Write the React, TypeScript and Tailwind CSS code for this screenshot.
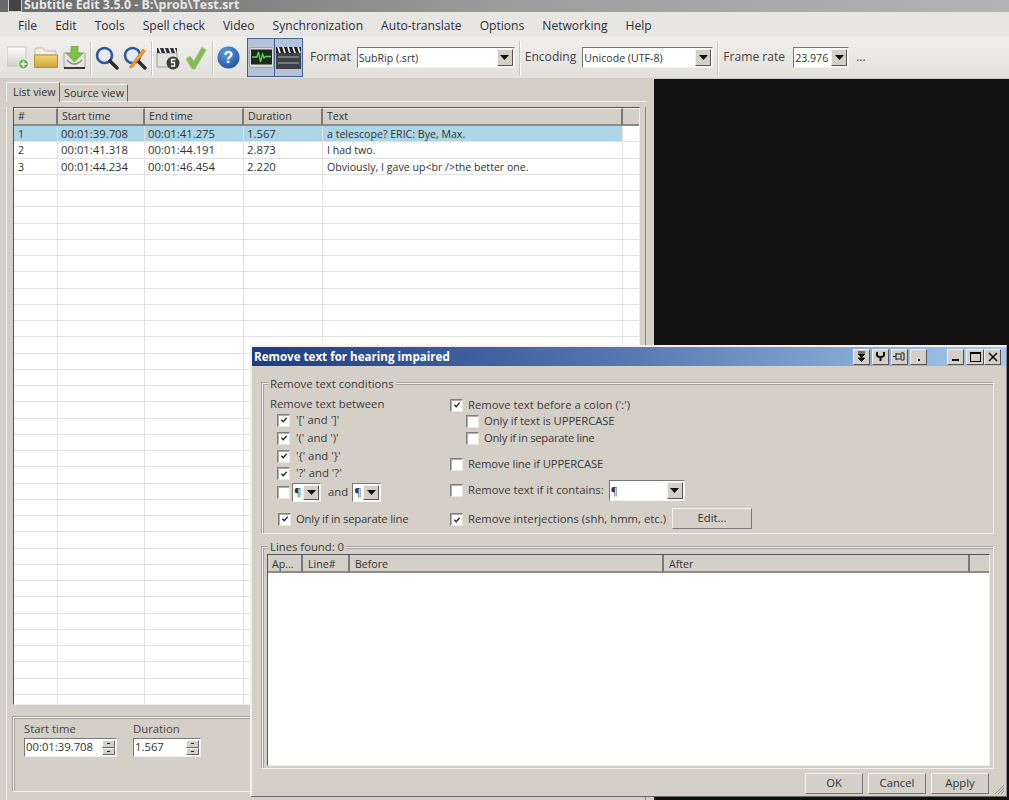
import React from "react";

const font = { fontFamily: '"Open Sans","Noto Sans","Liberation Sans",sans-serif' };

function Check({ on = false, size = "w-[13px] h-[13px]" }: { on?: boolean; size?: string }) {
  return (
    <span className={`${size} shrink-0 bg-white border border-t-[#808080] border-l-[#808080] border-b-[#e8e6e0] border-r-[#e8e6e0] shadow-[inset_1px_1px_0_#b0ada6] flex items-center justify-center`}>
      {on && (
        <svg width="8" height="8" viewBox="0 0 9 9">
          <path d="M1.5 4.2 L3.6 6.5 L7.5 2" fill="none" stroke="#222" strokeWidth="1.4" />
        </svg>
      )}
    </span>
  );
}

function Arrow({ w = "w-[16px]" }: { w?: string }) {
  return (
    <span className={`${w} self-stretch shrink-0 bg-[#d4d0c8] border border-t-[#f4f3f0] border-l-[#f4f3f0] border-b-[#555] border-r-[#555] flex items-center justify-center`}>
      <svg width="9" height="5" viewBox="0 0 9 5">
        <path d="M0 0 H9 L4.5 5 Z" fill="#111" />
      </svg>
    </span>
  );
}

function Combo({ text, w }: { text: string; w: string }) {
  return (
    <span className={`${w} h-[21px] shrink-0 flex items-center bg-white border border-t-[#777] border-l-[#777] border-b-[#f4f3f0] border-r-[#f4f3f0] p-[1px] text-[#333] text-[10.6px]`}>
      <span className="flex-1 overflow-hidden whitespace-nowrap leading-[16px]">{text}</span>
      <Arrow />
    </span>
  );
}

function Spin({ text, w }: { text: string; w: string }) {
  return (
    <span className={`${w} h-[19px] flex items-center bg-white border border-t-[#777] border-l-[#777] border-b-[#f0efec] border-r-[#f0efec] p-[1px] text-[11.3px] text-[#333]`}>
      <span className="flex-1 whitespace-nowrap overflow-hidden">{text}</span>
      <span className="w-[13px] self-stretch flex flex-col">
        <span className="flex-1 bg-[#d4d0c8] border border-t-white border-l-white border-b-[#666] border-r-[#666] flex items-center justify-center"><span className="w-[3px] h-[1px] bg-[#222]" /></span>
        <span className="flex-1 bg-[#d4d0c8] border border-t-white border-l-white border-b-[#666] border-r-[#666] flex items-center justify-center"><span className="w-[3px] h-[1px] bg-[#222]" /></span>
      </span>
    </span>
  );
}

function Btn({ children, w }: { children: React.ReactNode; w: string }) {
  return (
    <span className={`${w} h-[21px] shrink-0 flex items-center justify-center bg-[#d4d0c8] border border-t-[#f4f3f0] border-l-[#f4f3f0] border-b-[#777] border-r-[#777] text-[11.3px] text-[#333]`}>
      {children}
    </span>
  );
}

function Sep() {
  return <span className="block w-[2px] h-[34px] shrink-0 border-l border-l-[#c9c6bf] border-r border-r-white" />;
}

function NewIcon() {
  return (
    <svg width="23" height="24" viewBox="0 0 23 24">
      <defs><linearGradient id="n1" x1="0" y1="0" x2="0" y2="1"><stop offset="0" stopColor="#fff" /><stop offset="1" stopColor="#cfcfcb" /></linearGradient></defs>
      <path d="M0 1 H19 V20 H0 Z" fill="url(#n1)" stroke="#c4c3be" />
      <circle cx="16.5" cy="18" r="5" fill="#5fae4a" stroke="#fff" />
      <path d="M16.5 15 V21 M13.5 18 H19.5" stroke="#fff" strokeWidth="1.6" />
    </svg>
  );
}
function FolderIcon() {
  return (
    <svg width="24" height="22" viewBox="0 0 24 22">
      <defs><linearGradient id="f1" x1="0" y1="0" x2="0" y2="1"><stop offset="0" stopColor="#f0d678" /><stop offset="1" stopColor="#cfa438" /></linearGradient></defs>
      <path d="M1 6 V3 Q1 1 3 1 H9 L11 4 H22 V8 H1 Z" fill="#f0efe9" stroke="#bdb9ae" />
      <path d="M0.5 8 H23.5 V20.5 H0.5 Z" fill="url(#f1)" stroke="#b8912f" />
    </svg>
  );
}
function DownloadIcon() {
  return (
    <svg width="23" height="24" viewBox="0 0 23 24">
      <path d="M1 7 H22 V22 H1 Z" fill="#e6e5df" stroke="#a9a8a0" />
      <path d="M4 14 Q11.5 22 19 14" fill="none" stroke="#8b8b85" strokeWidth="1.5" />
      <path d="M1 21 H22 V23 H1 Z" fill="#3d3d3a" />
      <path d="M8 0 H15 V7 H20 L11.5 16 L3 7 H8 Z" fill="#7cc04a" stroke="#5e9e34" strokeWidth="0.6" />
    </svg>
  );
}
function SearchIcon({ pencil = false }: { pencil?: boolean }) {
  return (
    <svg width="24" height="24" viewBox="0 0 24 24">
      <circle cx="9.5" cy="9.5" r="7.5" fill="#e6ebf2" stroke="#2f559f" strokeWidth="2.6" />
      <path d="M15 15 L22 22" stroke="#2d2d2d" strokeWidth="3.4" strokeLinecap="round" />
      {pencil && <path d="M7 20 L20 3 L22.5 5 L10 21 L6.5 22 Z" fill="#ee9a2e" stroke="#c9711c" strokeWidth="0.6" />}
    </svg>
  );
}
function ClapClockIcon() {
  return (
    <svg width="24" height="24" viewBox="0 0 24 24">
      <path d="M1 7 H21 V21 H1 Z" fill="#e4e2dc" stroke="#9c9a94" />
      <path d="M1 2 H21 V7 H1 Z" fill="#2f2f2f" />
      <path d="M3 2 L5 7 M8 2 L10 7 M13 2 L15 7 M18 2 L20 7" stroke="#f3f3f3" strokeWidth="1.6" />
      <circle cx="17" cy="17" r="6.5" fill="#3c3c3c" />
      <path d="M19.5 13.5 H15.5 V16.5 H18.5 V20 H15" fill="none" stroke="#fff" strokeWidth="1.3" />
    </svg>
  );
}
function CheckIcon() {
  return (
    <svg width="22" height="24" viewBox="0 0 22 24">
      <path d="M1 13 L5 10 L9 15 L17 1 L21 4 L10 23 L7 23 Z" fill="#86b85c" stroke="#9ccb75" strokeWidth="0.7" />
    </svg>
  );
}
function HelpIcon() {
  return (
    <svg width="23" height="23" viewBox="0 0 23 23">
      <defs><radialGradient id="h1" cx="0.4" cy="0.3" r="0.8"><stop offset="0" stopColor="#5f9de0" /><stop offset="1" stopColor="#1c4f9c" /></radialGradient></defs>
      <circle cx="11.5" cy="11.5" r="11" fill="url(#h1)" />
      <text x="11.5" y="17" fontSize="16" fontWeight="700" fill="#fff" textAnchor="middle" fontFamily="Liberation Sans">?</text>
    </svg>
  );
}
function WaveIcon() {
  return (
    <svg width="25" height="22" viewBox="0 0 25 22">
      <rect x="0.5" y="0.5" width="24" height="20" rx="1.5" fill="#dedcd6" stroke="#a5a39d" />
      <rect x="2" y="2.5" width="21" height="15" fill="#1b2b22" />
      <path d="M3 10 H8 L9.5 5 L11.5 15 L13.5 7 L15 11 L16.5 9.5 H22" fill="none" stroke="#63d04e" strokeWidth="1.3" />
    </svg>
  );
}
function VideoIcon() {
  return (
    <svg width="25" height="24" viewBox="0 0 25 24">
      <rect x="0" y="7" width="25" height="16" fill="#3b4147" />
      <rect x="0" y="1" width="25" height="6" fill="#1d1d1d" />
      <path d="M2 1 L4 7 M7 1 L9 7 M12 1 L14 7 M17 1 L19 7 M22 1 L24 7" stroke="#eee" strokeWidth="1.8" />
      <path d="M2 11 H23 M2 17 H23" stroke="#aeb3b5" strokeWidth="1" />
    </svg>
  );
}

function Tool({ w, children }: { w: string; children: React.ReactNode }) {
  return <span className={`${w} shrink-0 flex items-center justify-center`}>{children}</span>;
}

function TitleBtn({ children, w = "w-[17px]" }: { children: React.ReactNode; w?: string }) {
  return (
    <span className={`${w} h-[16px] bg-[#d4d0c8] border border-t-[#f4f3f0] border-l-[#f4f3f0] border-b-[#555] border-r-[#555] flex items-center justify-center text-black`}>
      {children}
    </span>
  );
}

const cols = ["w-[44px]", "w-[87px]", "w-[99px]", "w-[79px]", "w-[300px]"];
const rows = [
  ["1", "00:01:39.708", "00:01:41.275", "1.567", "a telescope? ERIC: Bye, Max."],
  ["2", "00:01:41.318", "00:01:44.191", "2.873", "I had two."],
  ["3", "00:01:44.234", "00:01:46.454", "2.220", "Obviously, I gave up<br />the better one."],
];
const headers = ["#", "Start time", "End time", "Duration", "Text"];

function Grid() {
  const blank = Array.from({ length: 34 }, (_, i) => i);
  return (
    <div className="w-[627px] h-[598px] ml-[6px] mt-[5px] overflow-hidden bg-white border border-t-[#555] border-l-[#555] border-b-[#eee] border-r-[#eee] text-[10.6px] text-[#333]">
      <div className="flex h-[18px]">
        {headers.map((h, i) => (
          <span key={h} className={`${cols[i]} shrink-0 bg-[#d4d0c8] border-r-2 border-r-[#7a7a7a] border-b-2 border-b-[#8a8a8a] border-t border-t-[#f2f1ee] pl-[4px] leading-[14px]`}>{h}</span>
        ))}
        <span className="flex-1 bg-[#d4d0c8] border-b-2 border-b-[#8a8a8a] border-t border-t-[#f2f1ee]" />
      </div>
      {rows.map((r, i) => (
        <div key={i} className="flex h-[16.25px]">
          {r.map((c, j) => (
            <span key={j} className={`${cols[j]} shrink-0 border-r border-b border-[#e2e2e2] leading-[16px] whitespace-nowrap overflow-hidden ${j >= 1 && j <= 3 ? "text-[11.3px] pl-[3px]" : "pl-[4px]"} ${i === 0 ? "bg-[#add6e6]" : ""}`}>{c}</span>
          ))}
          <span className="flex-1 border-b border-[#e2e2e2]" />
        </div>
      ))}
      {blank.map((i) => (
        <div key={i} className="flex h-[16.25px]">
          {cols.map((c) => <span key={c} className={`${c} shrink-0 border-r border-b border-[#e2e2e2]`} />)}
          <span className="flex-1 border-b border-[#e2e2e2]" />
        </div>
      ))}
    </div>
  );
}

function CheckRow({ on, label, className = "", labelClass = "" }: { on?: boolean; label: string; className?: string; labelClass?: string }) {
  return (
    <div className={`flex items-center whitespace-nowrap ${className}`}>
      <Check on={on} />
      <span className={labelClass}>{label}</span>
    </div>
  );
}

function Dialog() {
  return (
    <div className="absolute left-[250px] top-[345px] w-[757px] h-[452px] bg-[#d4d0c8] border-t-2 border-l-2 border-t-[#f2f1ee] border-l-[#f2f1ee] border-r border-b border-r-[#888] border-b-[#666] text-[11.3px] text-[#3a3a3a]">
      <div className="h-[19px] flex items-center bg-gradient-to-r from-[#1c3d80] via-[#5878b0] to-[#a6caf0] pl-[2px] pr-[5px]">
        <span className="text-white font-bold text-[11.6px] whitespace-nowrap">Remove text for hearing impaired</span>
        <span className="ml-auto flex gap-[2px] mr-[20px]">
          <TitleBtn>
            <svg width="9" height="11" viewBox="0 0 9 11"><path d="M1 1 H8 M1 3 H8 L4.5 6.5 Z M1 7 H8 L4.5 10.5 Z" stroke="#111" fill="#111" strokeWidth="1" /></svg>
          </TitleBtn>
          <TitleBtn>
            <svg width="11" height="11" viewBox="0 0 11 11"><path d="M2 1 V4 Q2 6 5.5 6 Q9 6 9 4 V1 M5.5 6 V10" fill="none" stroke="#111" strokeWidth="2" /></svg>
          </TitleBtn>
          <TitleBtn>
            <svg width="13" height="9" viewBox="0 0 13 9"><path d="M0 4.5 H3 M3 1 V8 M3 2 H8 L8 7 H3 M8 1 H11 V8 H8" fill="none" stroke="#222" strokeWidth="1" /></svg>
          </TitleBtn>
          <TitleBtn><span className="w-[2px] h-[2px] bg-black mt-[7px]" /></TitleBtn>
        </span>
        <span className="flex">
          <span className="mr-[2px]"><TitleBtn><span className="w-[7px] h-[2px] bg-black mt-[7px]" /></TitleBtn></span>
          <TitleBtn w="w-[18px]"><span className="w-[11px] h-[10px] border border-black border-t-2" /></TitleBtn>
          <TitleBtn>
            <svg width="10" height="10" viewBox="0 0 10 10"><path d="M1 1 L9 9 M9 1 L1 9" stroke="#000" strokeWidth="1.5" /></svg>
          </TitleBtn>
        </span>
      </div>

      <div className="relative mt-[17px] ml-[10px] w-[732px] h-[151px] border border-[#f2f1ee] shadow-[inset_1px_1px_0_#a5a29b,-1px_-1px_0_#a5a29b] flex pl-[7px] pt-[13px]">
        <span className="absolute left-[5px] -top-[7px] px-[2px] bg-[#d4d0c8] leading-[13px]">Remove text conditions</span>
        <div className="w-[180px] shrink-0">
          <div className="leading-[14px]">Remove text between</div>
          <div className="pl-[7px]">
            <CheckRow on label="'[' and ']'" className="h-[18px] gap-[6px]" />
            <CheckRow on label="'(' and ')'" className="h-[18px] gap-[6px]" />
            <CheckRow on label="'{' and '}'" className="h-[18px] gap-[6px]" />
            <CheckRow on label="'?' and '?'" className="h-[17px] gap-[6px]" />
            <div className="flex items-center h-[20px]">
              <Check />
              <span className="ml-[2px] flex items-center h-[19px] w-[29px] bg-white border border-t-[#777] border-l-[#777] border-b-[#f4f3f0] border-r-[#f4f3f0] p-[1px]"><span className="flex-1">¶</span><Arrow w="w-[16px]" /></span>
              <span className="ml-[7px] mr-[4px]">and</span>
              <span className="flex items-center h-[19px] w-[29px] bg-white border border-t-[#777] border-l-[#777] border-b-[#f4f3f0] border-r-[#f4f3f0] p-[1px]"><span className="flex-1">¶</span><Arrow w="w-[16px]" /></span>
            </div>
            <CheckRow on label="Only if in separate line" labelClass="tracking-[-0.22px]" className="h-[18px] mt-[8px] ml-[1px] gap-[5px]" />
          </div>
        </div>
        <div className="flex-1">
          <CheckRow on label="Remove text before a colon (':')" className="h-[16px] gap-[5px]" />
          <div className="pl-[16px]">
            <CheckRow label="Only if text is UPPERCASE" labelClass="tracking-[-0.1px]" className="h-[17px] gap-[5px]" />
            <CheckRow label="Only if in separate line" labelClass="tracking-[-0.3px]" className="h-[17px] gap-[5px]" />
          </div>
          <CheckRow label="Remove line if UPPERCASE" labelClass="tracking-[-0.15px]" className="h-[17px] mt-[9px] gap-[5px]" />
          <div className="flex items-center h-[21px] mt-[7px] gap-[5px] whitespace-nowrap">
            <Check />
            <span>Remove text if it contains:</span>
            <Combo text="¶" w="w-[76px]" />
          </div>
          <div className="flex items-center h-[21px] mt-[8px] gap-[5px] whitespace-nowrap">
            <Check on />
            <span>Remove interjections (shh, hmm, etc.)</span>
            <span className="-mt-[3px] ml-[1px]"><Btn w="w-[80px]">Edit...</Btn></span>
          </div>
        </div>
      </div>

      <div className="relative mt-[13px] ml-[10px] w-[732px] h-[222px] border border-[#f2f1ee] shadow-[inset_1px_1px_0_#a5a29b,-1px_-1px_0_#a5a29b] pt-[6px] pl-[4px]">
        <span className="absolute left-[5px] -top-[8px] px-[2px] bg-[#d4d0c8] leading-[13px]">Lines found: 0</span>
        <div className="w-[723px] h-[212px] bg-white border border-t-[#555] border-l-[#555] border-b-[#eee] border-r-[#eee]">
          <div className="flex h-[18px] text-[10.6px] text-[#333]">
            <span className="w-[35px] shrink-0 bg-[#d4d0c8] border-r-2 border-r-[#7a7a7a] border-b-2 border-b-[#8a8a8a] pl-[4px] leading-[18px]">Ap...</span>
            <span className="w-[47px] shrink-0 bg-[#d4d0c8] border-r-2 border-r-[#7a7a7a] border-b-2 border-b-[#8a8a8a] pl-[5px] leading-[18px]">Line#</span>
            <span className="w-[314px] shrink-0 bg-[#d4d0c8] border-r-2 border-r-[#7a7a7a] border-b-2 border-b-[#8a8a8a] pl-[5px] leading-[18px]">Before</span>
            <span className="w-[306px] shrink-0 bg-[#d4d0c8] border-r-2 border-r-[#7a7a7a] border-b-2 border-b-[#8a8a8a] pl-[5px] leading-[18px]">After</span>
            <span className="flex-1 bg-[#d4d0c8] border-b-2 border-b-[#8a8a8a]" />
          </div>
        </div>
      </div>

      <div className="flex justify-end gap-[5px] mt-[4px] pr-[17px]">
        <Btn w="w-[58px]">OK</Btn>
        <Btn w="w-[58px]">Cancel</Btn>
        <Btn w="w-[58px]">Apply</Btn>
      </div>
      <svg className="absolute right-[1px] bottom-[1px]" width="12" height="12" viewBox="0 0 12 12">
        <path d="M11 2 L2 11 M11 5 L5 11 M11 8 L8 11" stroke="#8a8780" strokeWidth="1" />
      </svg>
    </div>
  );
}

export default function App() {
  return (
    <div className="relative w-[1009px] h-[800px] overflow-hidden bg-[#d4d0c8] text-[#333]" style={font}>
      <div className="h-[12px] overflow-hidden flex items-end bg-gradient-to-r from-[#6a6a6a] via-[#9c9c9c] to-[#b4b4b4] pl-[8px] text-[12.4px] font-bold text-[#e8e8e8]">
        <span className="w-[14px] h-[14px] bg-[#444] border border-[#ccc] mr-[2px] shrink-0" />
        <span className="leading-[14px] whitespace-nowrap">Subtitle Edit 3.5.0 - B:\prob\Test.srt</span>
      </div>
      <div className="h-[25px] flex items-center bg-[#e8e6e2] text-[12.1px] text-[#2c2c3a] pl-[18px] pt-[3px] gap-[18px]">
        {["File", "Edit", "Tools", "Spell check", "Video", "Synchronization", "Auto-translate", "Options", "Networking", "Help"].map((m) => (
          <span key={m} className="whitespace-nowrap">{m}</span>
        ))}
      </div>
      <div className="h-[41px] flex items-center bg-gradient-to-b from-[#f1f0ed] to-[#e2e0db] pl-[5px] text-[12.1px] text-[#444]">
        <Tool w="w-[27px]"><NewIcon /></Tool>
        <Tool w="w-[28px]"><FolderIcon /></Tool>
        <Tool w="w-[28px]"><DownloadIcon /></Tool>
        <span className="ml-[2px]"><Sep /></span>
        <Tool w="w-[29px]"><SearchIcon /></Tool>
        <Tool w="w-[28px]"><SearchIcon pencil /></Tool>
        <span className="ml-[2px]"><Sep /></span>
        <Tool w="w-[29px]"><ClapClockIcon /></Tool>
        <Tool w="w-[28px]"><CheckIcon /></Tool>
        <span className="ml-[2px]"><Sep /></span>
        <Tool w="w-[29px]"><HelpIcon /></Tool>
        <span className="ml-[4px] w-[28px] h-[39px] bg-[#b6c2d8] border border-[#3f5f98] flex items-center justify-center"><WaveIcon /></span>
        <span className="w-[28px] h-[39px] bg-[#b6c2d8] border border-[#3f5f98] border-l-0 flex items-center justify-center"><VideoIcon /></span>
        <span className="ml-[7px] mr-[6px]">Format</span>
        <Combo text="SubRip (.srt)" w="w-[158px]" />
        <span className="ml-[4px] mr-[4px]"><Sep /></span>
        <span className="mr-[6px]">Encoding</span>
        <Combo text="Unicode (UTF-8)" w="w-[131px]" />
        <span className="ml-[4px] mr-[4px]"><Sep /></span>
        <span className="mr-[8px] whitespace-nowrap">Frame rate</span>
        <Combo text="23.976" w="w-[56px]" />
        <span className="ml-[7px]">...</span>
      </div>
      <div className="flex h-[722px]">
        <div className="w-[654px] shrink-0 pl-[6px] pt-[4px]">
          <div className="flex items-end h-[20px] text-[10.8px] text-[#333]">
            <span className="w-[54px] h-[20px] bg-[#d4d0c8] border border-b-0 border-t-[#f4f3f0] border-l-[#f4f3f0] border-r-[#666] pl-[6px] leading-[17px]">List view</span>
            <span className="w-[68px] h-[18px] bg-[#d4d0c8] border border-b-[#f4f3f0] border-t-[#f4f3f0] border-l-0 border-r-[#666] pl-[4px] leading-[16px]">Source view</span>
            <span className="flex-1 border-b border-b-[#f4f3f0] mr-[8px]" />
          </div>
          <div className="w-[640px] h-[695px] border-l border-l-[#f4f3f0] border-r border-r-[#888] border-b-2 border-b-[#777]">
            <Grid />
            <div className="relative ml-[6px] mt-[12px] h-[75px] border border-[#f2f1ee] shadow-[inset_1px_1px_0_#a5a29b,-1px_-1px_0_#a5a29b] pl-[10px] pt-[3px] text-[11.3px] text-[#444]">
              <div className="flex gap-[16px]">
                <div>
                  <div className="h-[17px] leading-[15px]">Start time</div>
                  <Spin text="00:01:39.708" w="w-[93px]" />
                </div>
                <div>
                  <div className="h-[17px] leading-[15px]">Duration</div>
                  <Spin text="1.567" w="w-[68px]" />
                </div>
              </div>
            </div>
          </div>
        </div>
        <div className="flex-1 bg-[#111] border-t border-t-[#ccc]" />
      </div>
      <Dialog />
    </div>
  );
}
